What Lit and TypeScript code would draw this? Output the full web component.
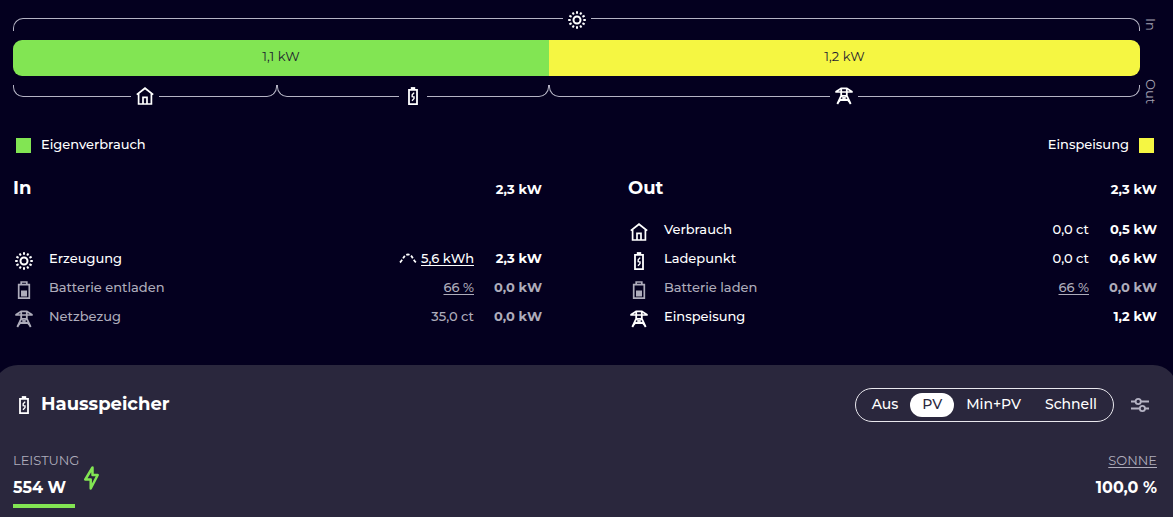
import { LitElement, html, css, svg } from "lit";
import { customElement, property, state } from "lit/decorators.js";

const glyphs: Record<string, unknown> = {
  sun: svg`
    <circle cx="9" cy="9" r="3.500" stroke-width="2"></circle>
    ${Array.from({ length: 12 }, (_, i) => svg`<path d="M9 0.200v2.500" stroke-width="2" transform="rotate(${i * 30} 9 9)"></path>`)}`,
  home: svg`
    <path d="M0.8 7.600L9 1.2L17.2 7.600" stroke-width="1.8"></path>
    <path d="M2.6 6.500v10.500h12.8V6.500M7 17v-6.6h4V17" stroke-width="1.7"></path>`,
  charger: svg`
    <path d="M5 2.800h8v14.300H5z" stroke-width="1.8"></path>
    <path d="M6.8 1.2h4.4" stroke-width="2.2"></path>
    <path d="M10.200 5.600L8.200 7.800V9.600L10 9.800V11.600L8 13.800" stroke-width="1.400"></path>`,
  battery: svg`
    <path d="M3.7 3.6h10.6v13.5H3.7zM6.2 3.4V1h5.6v2.4" stroke-width="1.7"></path>
    <path d="M6 9.500h6v6H6z" fill="currentColor" stroke="none"></path>`,
  grid: svg`
    <path d="M5.500 1.300h7M0.500 5L6 1.500M17.500 5L12 1.500M0.300 5h17.400" stroke-width="1.700"></path>
    <path d="M6.200 1v7.600L2.300 17M11.800 1v7.600L15.700 17M6 8.800h6M4.500 13h9" stroke-width="1.800"></path>
    <path d="M6.200 9.200l6.300 4L15.500 16.500M11.800 9.200l-6.300 4L2.500 16.500" stroke-width="1.200"></path>`,
  forecast: svg`<path d="M1 13.5C4.5 10 5 5.5 9 5.5s4.500 4.500 8 8" stroke-width="1.8" stroke-dasharray="3.2 1.8"></path>`,
  sliders: svg`
    <path d="M0 5.500h4.500M10 5.500h8M0 12.500h8.500M14 12.500h4" stroke-width="1.800"></path>
    <circle cx="7.200" cy="5.500" r="2.600" stroke-width="1.800"></circle>
    <circle cx="11.400" cy="12.500" r="2.600" stroke-width="1.800"></circle>`,
};

@customElement("app-icon")
class AppIcon extends LitElement {
  @property() name = "sun";
  static styles = css`
    :host { display: block; width: 18px; height: 18px; flex: none; }
    svg { display: block; width: 100%; height: 100%; fill: none; stroke: currentColor; }
  `;
  render() {
    return html`<svg viewBox="0 0 18 18" aria-hidden="true">${glyphs[this.name]}</svg>`;
  }
}

@customElement("flow-bar")
class FlowBar extends LitElement {
  static styles = css`
    :host { display: grid; grid-template-columns: 1fr 14px; column-gap: 3px; row-gap: 9px; }
    .row { display: flex; height: 20px; }
    .bracket { display: flex; justify-content: center; }
    .edge { flex: 1; height: 12px; box-sizing: border-box; border: 0 solid #b5b3c4; }
    .above .edge { align-self: flex-end; height: 13px; border-top-width: 1px; }
    .below .edge { border-bottom-width: 1px; }
    .edge.start { border-left-width: 1px; }
    .edge.end { border-right-width: 1px; }
    .above .start { border-top-left-radius: 10px; }
    .above .end { border-top-right-radius: 10px; }
    .below .start { border-bottom-left-radius: 10px; }
    .below .end { border-bottom-right-radius: 10px; }
    .mark { margin: 0 5px; }
    .below .mark { align-self: flex-end; }
    .bar { display: flex; height: 36px; border-radius: 9px; overflow: hidden; grid-column: 1; }
    .part { display: flex; align-items: center; justify-content: center; font-size: 13px; line-height: 32px; padding-bottom: 4px; box-sizing: border-box; color: #1d1a30; }
    .own { background: #82e553; }
    .feed { background: #f5f642; }
    .side { writing-mode: vertical-rl; justify-self: end; font-size: 13px; line-height: 12px; color: #a3a1b1; white-space: nowrap; }
    .side.in { padding-top: 7px; box-sizing: border-box; height: 20px; }
    .side.out { margin-top: -6px; height: 26px; }
  `;
  above = [{ icon: "sun", share: 100 }];
  parts = [
    { cls: "own", text: "1,1 kW", share: 47.56 },
    { cls: "feed", text: "1,2 kW", share: 52.44 },
  ];
  below = [
    { icon: "home", share: 23.42 },
    { icon: "charger", share: 24.14 },
    { icon: "grid", share: 52.44 },
  ];
  brackets(list: { icon: string; share: number }[], cls: string) {
    return html`<div class="row ${cls}">${list.map(
      (b) => html`<div class="bracket" style="width:${b.share}%">
        <span class="edge start"></span><app-icon class="mark" name=${b.icon}></app-icon><span class="edge end"></span>
      </div>`
    )}</div>`;
  }
  render() {
    return html`
      ${this.brackets(this.above, "above")}
      <span class="side in">In</span>
      <div class="bar">${this.parts.map((p) => html`<div class="part ${p.cls}" style="width:${p.share}%">${p.text}</div>`)}</div>
      <span></span>
      ${this.brackets(this.below, "below")}
      <span class="side out">Out</span>
    `;
  }
}

interface Entry {
  icon: string;
  name: string;
  detail?: string;
  link?: boolean;
  forecast?: boolean;
  power: string;
  muted?: boolean;
}

@customElement("flow-table")
class FlowTable extends LitElement {
  @property() heading = "";
  @property() total = "";
  @property({ attribute: false }) entries: Entry[] = [];
  static styles = css`
    :host { display: flex; flex-direction: column; justify-content: space-between; }
    .head { display: flex; justify-content: space-between; align-items: baseline; }
    h2 { margin: 0; font-size: 18px; line-height: 24px; font-weight: 700; }
    table { width: 100%; border-collapse: collapse; font-size: 13px; line-height: 20px; font-weight: 500; }
    th, td { padding: 0; height: 29px; vertical-align: middle; white-space: nowrap; }
    th { text-align: left; font-weight: 500; }
    .icon { width: 36px; padding: 6px 0 0 2px; box-sizing: border-box; }
    .detail { text-align: right; }
    .detail span { display: flex; justify-content: flex-end; align-items: center; gap: 4px; }
    .power { width: 68px; text-align: right; }
    .power, .total { font-weight: 700; font-size: 13px; }
    .muted { color: #aeacbb; }
    a { color: inherit; text-underline-offset: 2px; }
  `;
  render() {
    return html`
      <div class="head"><h2>${this.heading}</h2><span class="total">${this.total}</span></div>
      <table>
        ${this.entries.map(
          (e) => html`<tr class=${e.muted ? "muted" : ""}>
            <td class="icon"><app-icon name=${e.icon}></app-icon></td>
            <th scope="row">${e.name}</th>
            <td class="detail"><span>
              ${e.forecast ? html`<app-icon name="forecast"></app-icon>` : ""}
              ${e.link ? html`<a href="#">${e.detail}</a>` : e.detail ?? ""}
            </span></td>
            <td class="power">${e.power}</td>
          </tr>`
        )}
      </table>
    `;
  }
}

@customElement("app-root")
class AppRoot extends LitElement {
  @state() mode = "PV";
  static styles = css`
    :host { display: flex; flex-direction: column; min-height: 100vh; overflow: hidden; box-sizing: border-box; background: #04001f; color: #fff; font-family: Montserrat, Inter, sans-serif; font-size: 13px; line-height: 20px; }
    .overview { padding: 11px 16px 35px 13px; }
    .legend { display: flex; justify-content: space-between; margin: 29px 3px 0; font-weight: 500; }
    .key { display: flex; align-items: center; gap: 10px; }
    .swatch { width: 15px; height: 15px; margin-top: 2px; }
    .own { background: #82e553; }
    .feed { background: #f5f642; }
    .tables { display: grid; grid-template-columns: 1fr 1fr; gap: 86px; margin-top: 22px; min-height: 154px; }
    .panel { flex: 1; margin: 0 -4px 0 -6px; padding: 23px 20px 9px 19px; border-radius: 24px 24px 0 0; background: #2a273d; }
    .bar, .title, .controls, .stats { display: flex; align-items: center; }
    .bar, .stats { justify-content: space-between; }
    .title { gap: 8px; padding-left: 2px; }
    h1 { margin: 0; padding-bottom: 2px; font-size: 18px; line-height: 24px; font-weight: 700; }
    .controls { gap: 17px; }
    .modes { display: flex; border: 1px solid #e9e8ee; border-radius: 17px; padding: 4px; }
    button { font: inherit; color: inherit; background: none; border: 0; cursor: pointer; }
    .mode { height: 24px; padding: 0 12px 2px; border-radius: 12px; font-size: 14px; line-height: 22px; font-weight: 500; }
    .mode.active { background: #fff; color: #2a273d; }
    .settings { padding: 0 8px 0 0; color: #b5b3c4; }
    .stats { margin-top: 27px; align-items: flex-start; }
    .label { color: #aeacbb; line-height: 22px; }
    .value { padding-top: 1px; font-size: 16px; line-height: 32px; font-weight: 700; }
    .power { display: flex; gap: 5px; }
    .meter { height: 4px; width: 62px; background: #82e553; }
    .bolt { width: 15px; height: 24px; margin-top: 17px; fill: none; stroke: #82e553; stroke-width: 2.5; stroke-linejoin: round; }
    .sun { text-align: right; }
    a { color: inherit; text-underline-offset: 2px; }
  `;
  inflow: Entry[] = [
    { icon: "sun", name: "Erzeugung", detail: "5,6 kWh", link: true, forecast: true, power: "2,3 kW" },
    { icon: "battery", name: "Batterie entladen", detail: "66 %", link: true, power: "0,0 kW", muted: true },
    { icon: "grid", name: "Netzbezug", detail: "35,0 ct", power: "0,0 kW", muted: true },
  ];
  outflow: Entry[] = [
    { icon: "home", name: "Verbrauch", detail: "0,0 ct", power: "0,5 kW" },
    { icon: "charger", name: "Ladepunkt", detail: "0,0 ct", power: "0,6 kW" },
    { icon: "battery", name: "Batterie laden", detail: "66 %", link: true, power: "0,0 kW", muted: true },
    { icon: "grid", name: "Einspeisung", power: "1,2 kW" },
  ];
  render() {
    return html`
      <section class="overview">
        <flow-bar></flow-bar>
        <div class="legend">
          <span class="key"><i class="swatch own"></i>Eigenverbrauch</span>
          <span class="key">Einspeisung<i class="swatch feed"></i></span>
        </div>
        <div class="tables">
          <flow-table heading="In" total="2,3 kW" .entries=${this.inflow}></flow-table>
          <flow-table heading="Out" total="2,3 kW" .entries=${this.outflow}></flow-table>
        </div>
      </section>
      <section class="panel">
        <div class="bar">
          <div class="title"><app-icon name="charger"></app-icon><h1>Hausspeicher</h1></div>
          <div class="controls">
            <div class="modes" role="group" aria-label="Modus">
              ${["Aus", "PV", "Min+PV", "Schnell"].map(
                (m) => html`<button class="mode ${m === this.mode ? "active" : ""}" aria-pressed=${m === this.mode} @click=${() => (this.mode = m)}>${m}</button>`
              )}
            </div>
            <button class="settings" aria-label="Einstellungen"><app-icon name="sliders"></app-icon></button>
          </div>
        </div>
        <div class="stats">
          <div class="power">
            <div>
              <div class="label">LEISTUNG</div>
              <div class="value">554 W</div>
              <div class="meter"></div>
            </div>
            <svg class="bolt" viewBox="0 0 15 24" aria-hidden="true"><path d="M8.500 1.500L1.300 13.500H6.700V22.500L13.700 9H8.500z"></path></svg>
          </div>
          <div class="sun">
            <div class="label"><a href="#">SONNE</a></div>
            <div class="value">100,0 %</div>
          </div>
        </div>
      </section>
    `;
  }
}
